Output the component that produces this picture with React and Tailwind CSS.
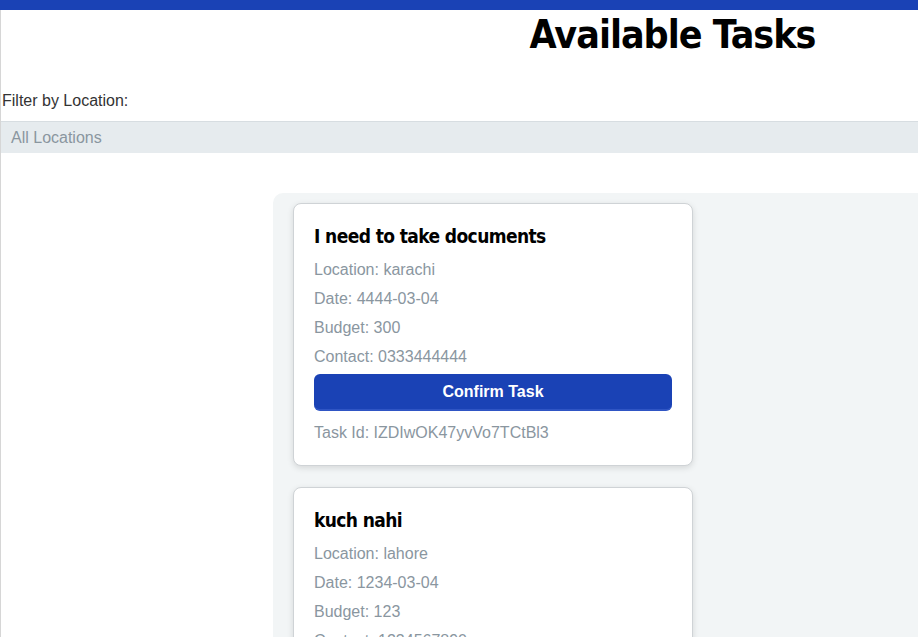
import React from "react";

const TASKS = [
  {
    title: "I need to take documents",
    location: "karachi",
    date: "4444-03-04",
    budget: "300",
    contact: "0333444444",
    id: "IZDIwOK47yvVo7TCtBl3",
  },
  {
    title: "kuch nahi",
    location: "lahore",
    date: "1234-03-04",
    budget: "123",
    contact: "1234567890",
    id: "aB3kLm9QwErT5yUi0pZx",
  },
];

const headFont = { fontFamily: '"DejaVu Sans Condensed", "DejaVu Sans", sans-serif' };

function TaskCard({ task }) {
  return (
    <div className="w-[400px] bg-white border border-[#cfd3d6] rounded-[8px] shadow-[0_2px_6px_rgba(0,0,0,0.12)] px-[20px] pt-[19px] pb-[23px] mb-[21px]">
      <h3 className="text-[19px] leading-[26px] font-bold text-black tracking-[-0.6px]" style={headFont}>
        {task.title}
      </h3>
      <p className="mt-[12px] leading-[18px] text-[16px] text-[#8a969f]">Location: {task.location}</p>
      <p className="mt-[11px] leading-[18px] text-[16px] text-[#8a969f]">Date: {task.date}</p>
      <p className="mt-[11px] leading-[18px] text-[16px] text-[#8a969f]">Budget: {task.budget}</p>
      <p className="mt-[11px] leading-[18px] text-[16px] text-[#8a969f]">Contact: {task.contact}</p>
      <button className="mt-[8px] w-full h-[37px] rounded-[6px] bg-[#1a42b5] text-white font-bold text-[16px] border-b-2 border-[#2f55c4]">
        Confirm Task
      </button>
      <p className="mt-[13px] leading-[18px] text-[16px] text-[#8a969f]">Task Id: {task.id}</p>
    </div>
  );
}

export default function App() {
  return (
    <div
      className="w-[918px] h-[637px] overflow-hidden bg-white"
      style={{ fontFamily: '"Liberation Sans", Arial, sans-serif' }}
    >
      <div className="h-[10px] w-full bg-[#1a42b5]" />
      <div className="w-[1344px] h-[627px] border-l border-[#d6d6d6]">
        <h1
          className="text-center text-[39px] leading-[48px] font-bold text-black pt-[1px] tracking-[-1px]"
          style={headFont}
        >
          Available Tasks
        </h1>
        <label className="block mt-[33px] ml-[1px] text-[16px] leading-[18px] text-[#333]">
          Filter by Location:
        </label>
        <div className="mt-[11px] h-[32px] bg-[#e6ebee] border-t border-[#d7dde1] flex items-center pl-[10px] text-[16px] text-[#8a969f]">
          All Locations
        </div>
        <div className="mt-[40px] ml-[272px] w-[798px] h-[600px] bg-[#f2f5f6] rounded-[10px] pt-[10px] pl-[20px]">
          {TASKS.map((t) => (
            <TaskCard key={t.id} task={t} />
          ))}
        </div>
      </div>
    </div>
  );
}
